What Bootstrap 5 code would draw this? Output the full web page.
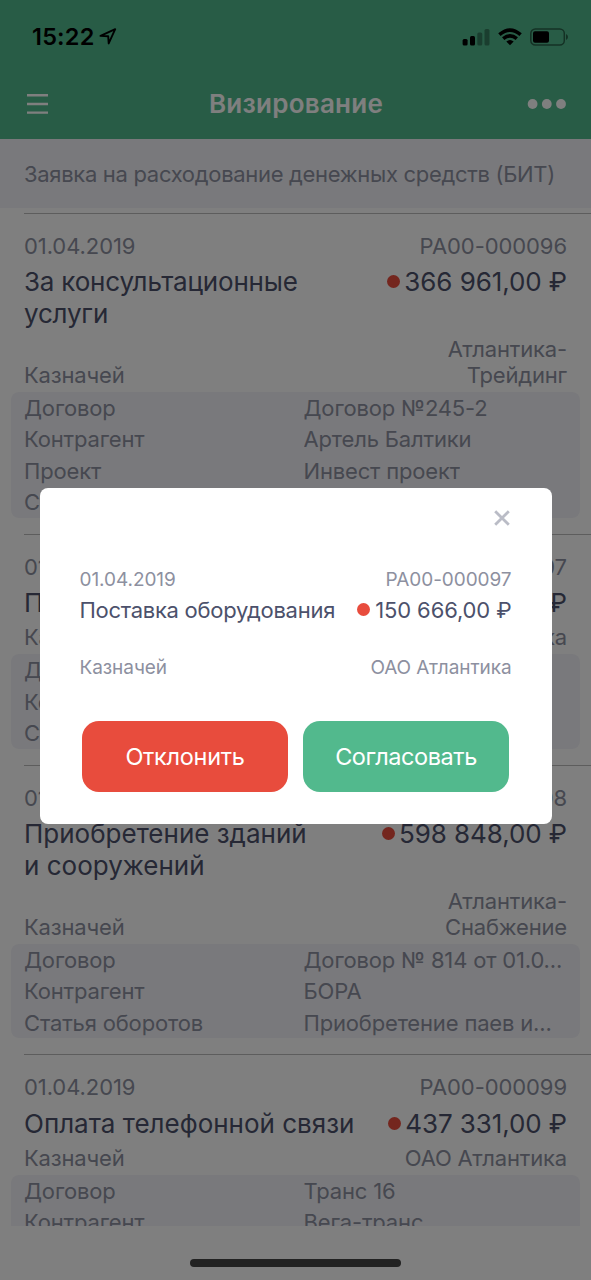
<!DOCTYPE html>
<html lang="ru">
<head>
<meta charset="utf-8">
<meta name="viewport" content="width=device-width, initial-scale=1">
<title>Визирование</title>
<link href="https://cdn.jsdelivr.net/npm/bootstrap@5.3.0/dist/css/bootstrap.min.css" rel="stylesheet">
<style>
body{font-family:Inter,"Liberation Sans",sans-serif;height:1280px;background:#fff;color:#8d90a0;overflow:hidden;font-size:22px;line-height:26px;letter-spacing:-.17px}
.screen{height:1280px;width:591px}
.topbar{height:139px;background:#51b98d}
.status{height:72px;padding:1px 23px 0 32px;color:#000}
.clock{font-size:23.5px;font-weight:600;letter-spacing:.2px}
.titlebar{height:67px;color:#fff;padding:0 25px 3px 27px}
.page-title{font-size:26px;font-weight:600;letter-spacing:.25px}
.feed{height:1087px}
.section-head{height:69px;background:#f3f3f8;padding:0 24px;margin-bottom:4.8px;letter-spacing:-.31px}
.request{margin-left:24px;border-top:1px solid #bbb;padding:19px 24px 16px 0}
.stamp{letter-spacing:-.08px}
.headline{color:#4c516b;font-size:26px;line-height:31.5px;margin:7.4px 0 5.8px;letter-spacing:0}
.headline.two-line{margin-bottom:6.6px}
.headline .subject{width:340px}
.headline .subject.narrow{width:300px}
.headline .subject.tight{letter-spacing:-.2px}
.amount{letter-spacing:-.08px}
.dot{width:13px;height:13px;border-radius:50%;background:#e84c3d;flex:none}
.details{background:#f3f3f8;border-radius:8px;margin:3.9px -13px 0;padding:0 12px 0 13px;line-height:29.5px}
.details>div{padding-top:2px}
.details .key{width:279.5px;flex:none}
.home-bar{width:211px;height:8px;border-radius:4px;background:#444;margin-top:33px}
.shade{background:rgba(0,0,0,.5)}
.dialog-box{left:39.5px;top:487.6px;width:512px;height:336.4px;background:#fff;border-radius:8px;padding:0 40px;font-size:19px;line-height:24px;letter-spacing:-.07px}
.dialog-box .close-row{height:80px;padding:22.5px 2px 0 0}
.dialog-box .headline{font-size:22px;line-height:28px;margin:4.2px 0 31.8px;letter-spacing:-.28px}
.dialog-box .amount{letter-spacing:-.12px}
.dialog-box .dot{margin-right:1px}
.choices{gap:15px;margin-top:41.5px}
.choice{width:206px;height:71px;border-radius:17px;border:0;color:#fff;font-size:23.5px;padding:1px 0 0;letter-spacing:-.3px}
.choice.reject{background:#e84c3d}.choice.approve{background:#52b98d;letter-spacing:-.45px}
</style>
</head>
<body>
<div class="screen position-relative overflow-hidden d-flex flex-column">
  <header class="topbar">
    <div class="status d-flex align-items-center justify-content-between">
      <div class="d-flex align-items-center gap-1">
        <span class="clock">15:22</span>
        <svg width="18" height="17" viewBox="0 0 18 17" fill="none" stroke="#000" stroke-width="1.9" stroke-linejoin="round"><path d="M1.5 7.9 16.2 1.2 9.7 15.4 9.2 8.2Z"/></svg>
      </div>
      <div class="d-flex align-items-center">
        <svg width="28" height="18" viewBox="0 0 28 18"><rect x="0.6" y="11" width="5" height="6.5" rx="1.5"/><rect x="8" y="8" width="5" height="9.5" rx="1.5"/><g fill="#357d5e"><rect x="15.3" y="4.5" width="5" height="13" rx="1.5"/><rect x="22.5" y="1" width="5" height="16.5" rx="1.5"/></g></svg>
        <svg class="ms-2" width="24" height="18" viewBox="0 0 24 18" fill="none" stroke="#000" stroke-width="3.6"><path d="M1.4 6.7Q12-2.6 22.6 6.7"/><path d="M5.2 10.7Q12 4.9 18.8 10.7"/><path d="M8.3 13.6Q12 10.5 15.7 13.6L12 17.3Z" fill="#000" stroke="none"/></svg>
        <svg class="ms-2" width="38" height="18" viewBox="0 0 38 18"><rect x=".8" y="1" width="33.5" height="16" rx="4.5" fill="none" stroke="#286349" stroke-width="1.5"/><rect x="3" y="3.3" width="16" height="11.4" rx="2"/><path d="M36 6q2 .8 2 3t-2 3Z" fill="#286349"/></svg>
      </div>
    </div>
    <div class="titlebar d-flex align-items-center justify-content-between">
      <svg width="38" height="22" viewBox="0 0 38 22" stroke="#fff" stroke-width="2.4"><path d="M0 2.3h21M0 11h21M0 19.6h21"/></svg>
      <span class="page-title">Визирование</span>
      <svg width="39" height="10" viewBox="0 0 39 10" fill="#fff"><circle cx="5.6" cy="5" r="4.9"/><circle cx="19.8" cy="5" r="4.9"/><circle cx="34" cy="5" r="4.9"/></svg>
    </div>
  </header>

  <main class="feed overflow-hidden flex-shrink-0">
    <div class="section-head d-flex align-items-center text-nowrap">Заявка на расходование денежных средств (БИТ)</div>

    <article class="request">
      <div class="stamp d-flex justify-content-between"><span>01.04.2019</span><span>РА00-000096</span></div>
      <div class="headline two-line d-flex justify-content-between"><span class="subject narrow tight">За консультационные<br>услуги</span><span class="amount d-flex align-items-center gap-1 align-self-start text-nowrap"><i class="dot"></i><span>366 961,00 ₽</span></span></div>
      <div class="d-flex justify-content-between align-items-end"><span>Казначей</span><span class="text-end">Атлантика-<br>Трейдинг</span></div>
      <div class="details">
        <div class="d-flex"><span class="key">Договор</span><span class="text-truncate">Договор №245-2</span></div>
        <div class="d-flex"><span class="key">Контрагент</span><span class="text-truncate">Артель Балтики</span></div>
        <div class="d-flex"><span class="key">Проект</span><span class="text-truncate">Инвест проект</span></div>
        <div class="d-flex"><span class="key">Статья оборотов</span><span class="text-nowrap">Приобретение усл...</span></div>
      </div>
    </article>

    <article class="request">
      <div class="stamp d-flex justify-content-between"><span>01.04.2019</span><span>РА00-000097</span></div>
      <div class="headline d-flex justify-content-between"><span class="subject text-nowrap">Поставка оборудования</span><span class="amount d-flex align-items-center gap-1 text-nowrap"><i class="dot"></i><span>150 666,00 ₽</span></span></div>
      <div class="d-flex justify-content-between"><span>Казначей</span><span>ОАО Атлантика</span></div>
      <div class="details">
        <div class="d-flex"><span class="key">Договор</span></div>
        <div class="d-flex"><span class="key">Контрагент</span></div>
        <div class="d-flex"><span class="key">Статья оборотов</span></div>
      </div>
    </article>

    <article class="request">
      <div class="stamp d-flex justify-content-between"><span>01.04.2019</span><span>РА00-000098</span></div>
      <div class="headline two-line d-flex justify-content-between"><span class="subject narrow">Приобретение зданий<br>и сооружений</span><span class="amount d-flex align-items-center gap-1 align-self-start text-nowrap"><i class="dot"></i><span>598 848,00 ₽</span></span></div>
      <div class="d-flex justify-content-between align-items-end"><span>Казначей</span><span class="text-end">Атлантика-<br>Снабжение</span></div>
      <div class="details">
        <div class="d-flex"><span class="key">Договор</span><span class="text-nowrap">Договор № 814 от 01.0...</span></div>
        <div class="d-flex"><span class="key">Контрагент</span><span>БОРА</span></div>
        <div class="d-flex"><span class="key">Статья оборотов</span><span class="text-nowrap">Приобретение паев и...</span></div>
      </div>
    </article>

    <article class="request">
      <div class="stamp d-flex justify-content-between"><span>01.04.2019</span><span>РА00-000099</span></div>
      <div class="headline d-flex justify-content-between"><span class="subject text-nowrap">Оплата телефонной связи</span><span class="amount d-flex align-items-center gap-1 text-nowrap"><i class="dot"></i><span>437 331,00 ₽</span></span></div>
      <div class="d-flex justify-content-between"><span>Казначей</span><span>ОАО Атлантика</span></div>
      <div class="details">
        <div class="d-flex"><span class="key">Договор</span><span>Транс 16</span></div>
        <div class="d-flex"><span class="key">Контрагент</span><span>Вега-транс</span></div>
      </div>
    </article>
  </main>
  <div class="home-bar mx-auto flex-shrink-0"></div>

  <div class="shade position-absolute top-0 start-0 w-100 h-100"></div>

  <section class="dialog-box position-absolute" role="dialog">
    <div class="close-row d-flex justify-content-end align-items-start">
      <svg width="16" height="16" viewBox="0 0 16 16" stroke="#babcc6" stroke-width="2.8"><path d="M1.2 1.2 14.8 14.8M14.8 1.2 1.2 14.8"/></svg>
    </div>
    <div class="d-flex justify-content-between"><span>01.04.2019</span><span>РА00-000097</span></div>
    <div class="headline d-flex justify-content-between text-nowrap"><span>Поставка оборудования</span><span class="amount d-flex align-items-center gap-1"><i class="dot"></i><span>150 666,00 ₽</span></span></div>
    <div class="d-flex justify-content-between"><span>Казначей</span><span>ОАО Атлантика</span></div>
    <div class="choices d-flex justify-content-center">
      <button class="choice reject" type="button">Отклонить</button>
      <button class="choice approve" type="button">Согласовать</button>
    </div>
  </section>
</div>
<script src="https://cdn.jsdelivr.net/npm/bootstrap@5.3.0/dist/js/bootstrap.bundle.min.js"></script>
</body>
</html>
